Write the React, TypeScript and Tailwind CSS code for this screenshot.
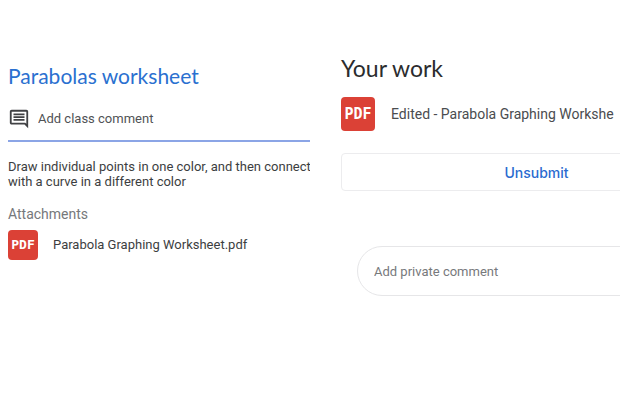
import clsx from 'clsx';

type PdfIconProps = {
  large?: boolean;
};

function PdfIcon({ large = false }: PdfIconProps) {
  return (
    <span
      className={clsx(
        "flex shrink-0 items-center justify-center rounded bg-[#db4136] font-['DejaVu_Sans_Mono',monospace] font-bold text-white",
        large ? 'size-[34px] text-[15px]' : 'size-[30px] text-[13px]'
      )}
    >
      PDF
    </span>
  );
}

function CommentIcon() {
  return (
    <svg viewBox="0 0 24 24" className="size-[22px] shrink-0" fill="#404144" aria-hidden="true">
      <path d="M21.99 4c0-1.1-.89-2-1.99-2H4c-1.1 0-2 .9-2 2v12c0 1.1.9 2 2 2h14l4 4-.01-18zM20 4v13.17L18.83 16H4V4h16zM6 12h12v2H6zm0-3h12v2H6zm0-3h12v2H6z" />
    </svg>
  );
}

function Assignment() {
  return (
    <section className="overflow-hidden pt-16 pl-2">
      <h1 className="font-[Lato,sans-serif] text-[21px] leading-6 text-[#2a70d0]">
        Parabolas worksheet
      </h1>

      <label className="mt-3 flex h-[42px] items-center gap-2 border-b-2 border-[#8ba5e6] pb-0.5">
        <CommentIcon />
        <input
          type="text"
          placeholder="Add class comment"
          className="min-w-0 flex-1 text-[13px] outline-none placeholder:text-[#505255]"
        />
      </label>

      <p className="mt-[17px] text-[13px] leading-[15px] whitespace-nowrap text-[#3c3e41]">
        Draw individual points in one color, and then connect
        <br />
        with a curve in a different color
      </p>

      <h2 className="mt-[17px] text-[14px] leading-4 text-[#76787b]">Attachments</h2>
      <a href="#worksheet" className="mt-2 flex items-center gap-[15px] text-[13px] text-[#3c3e41]">
        <PdfIcon />
        <span>Parabola Graphing Worksheet.pdf</span>
      </a>
    </section>
  );
}

function YourWork() {
  return (
    <section className="overflow-hidden pt-[54px] pl-[31px]">
      <h2 className="font-[Lato,sans-serif] text-[23px] leading-7 text-[#2b2c2e]">Your work</h2>

      <a
        href="#edited"
        className="mt-[15px] flex items-center gap-4 text-[14px] whitespace-nowrap text-[#4a4c4f]"
      >
        <PdfIcon large />
        <span>Edited - Parabola Graphing Workshe</span>
      </a>

      {/* both controls run past the right edge of the panel */}
      <div className="-mr-28">
        <button
          type="button"
          className="mt-[22px] h-[38px] w-full rounded border border-[#ececee] font-[Inter,sans-serif] text-[14px] font-medium text-[#2a6bd0]"
        >
          Unsubmit
        </button>
        <div className="pt-[55px] pl-4">
          <input
            type="text"
            aria-label="Add private comment"
            placeholder="Add private comment"
            className="h-[50px] w-full rounded-full border border-[#e6e6e8] px-4 text-[13px] outline-none placeholder:text-[#77797c]"
          />
        </div>
      </div>
    </section>
  );
}

export default function App() {
  return (
    <main className="grid min-h-screen grid-cols-2 bg-white font-[Roboto,sans-serif]">
      <Assignment />
      <YourWork />
    </main>
  );
}
